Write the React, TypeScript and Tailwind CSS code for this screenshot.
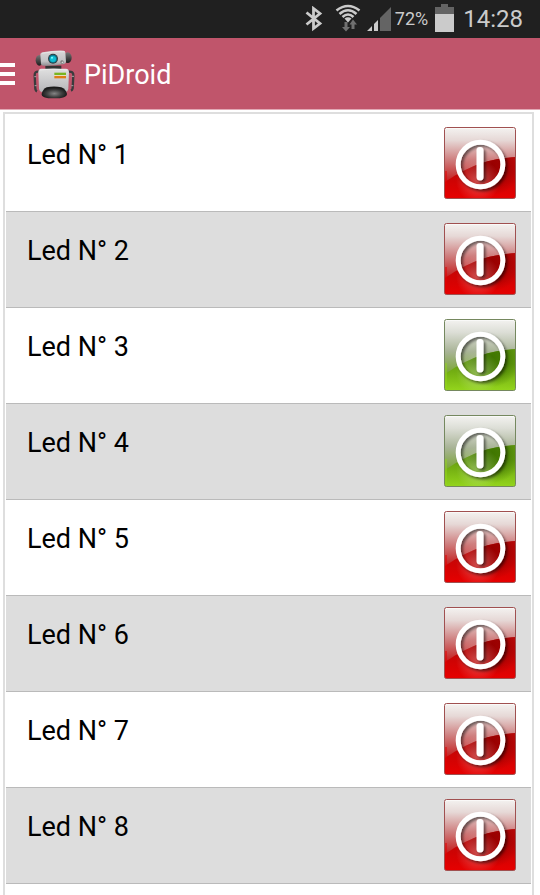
import { useId, useState } from "react";

type Led = { id: number; on: boolean };

const INITIAL_LEDS: Led[] = [
	{ id: 1, on: false },
	{ id: 2, on: false },
	{ id: 3, on: true },
	{ id: 4, on: true },
	{ id: 5, on: false },
	{ id: 6, on: false },
	{ id: 7, on: false },
	{ id: 8, on: false },
];

const PALETTES = {
	on: { edge: "#75885f", top: "#dcdeD6", mid: "#a9b497", gloss: "#7ba636", base: "#65a008", dark: "#3f7500", bright: "#93d41c" },
	off: { edge: "#a05050", top: "#e6d8d6", mid: "#cf8080", gloss: "#c42020", base: "#c40000", dark: "#980000", bright: "#e60000" },
};

function BluetoothIcon() {
	return (
		<svg width="18" height="26" viewBox="0 0 18 26" fill="none" aria-hidden="true">
			<path
				d="M1.500 6.500 L15 17.500 L8.500 22.500 V2.500 L15 7.500 L1.500 18.500"
				stroke="#cbcbcb"
				strokeWidth="2.800"
				strokeLinejoin="miter"
			/>
		</svg>
	);
}

function WifiIcon() {
	return (
		<svg width="26" height="28" viewBox="0 0 26 28" fill="none" aria-hidden="true">
			<g stroke="#cbcbcb" strokeWidth="2.600">
				<path d="M1.500 6.500 Q13 -2.500 24.500 6.500" />
				<path d="M4.500 10 Q13 2.500 21.500 10" />
				<path d="M7.500 13 Q13 8 18.500 13" />
			</g>
			<path d="M9.500 14.500 Q13 12 16.500 14.500 L13 18.500Z" fill="#cbcbcb" />
			<path
				d="M9.500 18 h3 v5 h2.500 L11 27.500 L7 23 h2.500Z M16.500 25 h3 v-4.500 h2.500 L18 15.500 L14.500 20.500 h2Z"
				fill="#707070"
			/>
		</svg>
	);
}

function SignalIcon() {
	return (
		<svg width="24" height="24" viewBox="0 0 24 24" aria-hidden="true">
			<path d="M0 24 L5 19 V24Z M7 24 V17 L11 13 V24Z" fill="#cbcbcb" />
			<path d="M13 24 V11 L24 0 V24Z" fill="#646464" />
		</svg>
	);
}

function BatteryIcon() {
	return (
		<svg width="19" height="28" viewBox="0 0 19 28" aria-hidden="true">
			<path d="M6 0 H13 V3 H19 V10 H0 V3 H6Z" fill="#646464" />
			<path d="M0 10 H19 V28 H0Z" fill="#cbcbcb" />
		</svg>
	);
}

function RobotLogo() {
	return (
		<svg width="52" height="58" viewBox="0 0 156 174" aria-hidden="true">
			<defs>
				<linearGradient id="robot-head" x1="0" y1="0" x2="0" y2="1">
					<stop offset="0" stopColor="#d8d8d8" />
					<stop offset="0.7" stopColor="#c2c2c4" />
					<stop offset="1" stopColor="#8d8d90" />
				</linearGradient>
				<linearGradient id="robot-body" x1="0" y1="0" x2="0" y2="1">
					<stop offset="0" stopColor="#e0e0e0" />
					<stop offset="1" stopColor="#b5b5b8" />
				</linearGradient>
				<radialGradient id="robot-base" cx="0.5" cy="0.6" r="0.5">
					<stop offset="0" stopColor="#858585" />
					<stop offset="0.6" stopColor="#3f3f3f" />
					<stop offset="1" stopColor="#1b1b1b" />
				</radialGradient>
				<linearGradient id="robot-ear" x1="0" y1="0" x2="0" y2="1">
					<stop offset="0" stopColor="#777" />
					<stop offset="1" stopColor="#1b1b1b" />
				</linearGradient>
			</defs>
			<ellipse cx="34" cy="46" rx="11" ry="16" fill="url(#robot-ear)" />
			<ellipse cx="119" cy="38" rx="12" ry="16" fill="url(#robot-ear)" />
			<path d="M52 62 H100 V74 H52Z" fill="#333" />
			<path
				d="M44 22 Q74 16 107 17 Q111 17 112 22 L114 50 Q114 56 108 57 Q78 63 46 62 Q40 62 39 56 L37 28 Q37 23 44 22Z"
				fill="url(#robot-head)"
			/>
			<path d="M42 25 Q74 18 110 20" fill="none" stroke="#eeeeee" strokeWidth="2" />
			<circle cx="75" cy="41" r="15" fill="#333d42" />
			<circle cx="75" cy="41" r="12" fill="#087c92" />
			<circle cx="75" cy="42" r="9" fill="#10bdd3" />
			<circle cx="72" cy="38" r="3" fill="#80ffff" />
			<circle cx="102" cy="51" r="5" fill="#777" />
			<circle cx="103" cy="52" r="2.500" fill="#ddd" />
			<path
				d="M32 80 Q20 78 20 91 L22 132 Q23 137 27 139 M120 80 Q137 78 136 91 L134 130 Q133 135 129 137"
				fill="none"
				stroke="#3b3b3d"
				strokeWidth="7"
			/>
			<path d="M19 95 H25 M131 94 H138 M20 122 H26 M130 122 H136" stroke="#a7a7a7" strokeWidth="3" />
			<path
				d="M40 71 H114 Q123 72 123 82 L121 130 Q120 142 109 142 H46 Q34 142 33 130 L31 82 Q31 72 40 71Z"
				fill="url(#robot-body)"
			/>
			<path d="M36 75 Q77 69 118 75" fill="none" stroke="#f1f1f1" strokeWidth="2" />
			<path d="M79 83 H114 V90 H79Z" fill="#79b520" />
			<path d="M79 93 H114 V100 H79Z" fill="#df7d16" />
			<path d="M79 90 H114 V93 H79Z" fill="#e5dfc0" />
			<path
				d="M56 127 Q78 122 100 127 Q113 132 117 146 Q118 160 78 160 Q38 160 41 146 Q45 132 56 127Z"
				fill="url(#robot-base)"
			/>
		</svg>
	);
}

function PowerIcon({ on }: { on: boolean }) {
	const id = useId();
	const colors = on ? PALETTES.on : PALETTES.off;

	return (
		<svg width="72" height="72" viewBox="0 0 72 72" aria-hidden="true">
			<defs>
				<linearGradient id={`${id}-top`} x1="0" y1="0" x2="0" y2="1">
					<stop offset="0" stopColor="#f4f3f1" />
					<stop offset="0.18" stopColor={colors.top} />
					<stop offset="0.45" stopColor={colors.mid} />
					<stop offset="0.75" stopColor={colors.gloss} />
					<stop offset="1" stopColor={colors.bright} />
				</linearGradient>
				<linearGradient id={`${id}-bottom`} x1="0" y1="28" x2="0" y2="71" gradientUnits="userSpaceOnUse">
					<stop offset="0" stopColor={colors.base} />
					<stop offset="0.4" stopColor={colors.base} />
					<stop offset="1" stopColor={colors.bright} />
				</linearGradient>
				<radialGradient id={`${id}-shade`} cx="48" cy="38" r="30" gradientUnits="userSpaceOnUse">
					<stop offset="0" stopColor={colors.dark} />
					<stop offset="0.5" stopColor={colors.dark} stopOpacity="0.75" />
					<stop offset="1" stopColor={colors.dark} stopOpacity="0" />
				</radialGradient>
				<radialGradient id={`${id}-glow`} cx="0.5" cy="0.5" r="0.5">
					<stop offset="0" stopColor="#fff" stopOpacity="0.3" />
					<stop offset="1" stopColor="#fff" stopOpacity="0" />
				</radialGradient>
				<filter id={`${id}-shadow`} x="-20%" y="-20%" width="150%" height="150%">
					<feDropShadow dx="2" dy="2" stdDeviation="1.800" floodColor="#000" floodOpacity="0.55" />
				</filter>
			</defs>
			<rect x="0.500" y="0.500" width="71" height="71" rx="2" fill={`url(#${id}-top)`} />
			<path d="M1 55 C10 49 18 44 30 39 C44 33 58 31 71 30 V71 H1Z" fill={`url(#${id}-bottom)`} opacity="0.9" />
			<path d="M1 55 C10 49 18 44 30 39 C44 33 58 31 71 30 V71 H1Z" fill={`url(#${id}-shade)`} />
			<circle cx="34" cy="54" r="22" fill={`url(#${id}-glow)`} />
			<path d="M2 70 V44" stroke={colors.bright} strokeWidth="2" opacity="0.5" />
			<path d="M2 1.500 H70" stroke="#fff" strokeWidth="1" opacity="0.6" />
			<rect x="0.500" y="0.500" width="71" height="71" rx="2" fill="none" stroke={colors.edge} />
			<g filter={`url(#${id}-shadow)`} fill="none" stroke="#fff">
				<circle cx="36.500" cy="37.500" r="22.300" strokeWidth="5" />
				<path d="M36 23.500 V50" strokeWidth="7" strokeLinecap="round" />
			</g>
		</svg>
	);
}

function StatusBar() {
	return (
		<div className="flex h-[38px] shrink-0 items-center justify-end bg-[#202020] pr-[17px] text-[#cbcbcb]">
			<BluetoothIcon />
			<div className="ml-3 pb-0.5">
				<WifiIcon />
			</div>
			<div className="ml-1.5">
				<SignalIcon />
			</div>
			<span className="ml-1 text-lg">72%</span>
			<div className="ml-[7px] pb-0.5">
				<BatteryIcon />
			</div>
			<time className="ml-[9px] text-2xl">14:28</time>
		</div>
	);
}

function AppHeader() {
	return (
		<header className="flex h-[72px] shrink-0 items-center border-b border-[#e2a9b5] bg-[#c0556b]">
			<button type="button" aria-label="Open menu" className="flex w-[15px] flex-col gap-[5px]">
				<span className="h-1 w-full bg-white" />
				<span className="h-1 w-full bg-white" />
				<span className="h-1 w-full bg-white" />
			</button>
			<div className="ml-[13px]">
				<RobotLogo />
			</div>
			<h1 className="ml-1 pt-0.5 text-[27px] leading-8 text-white">PiDroid</h1>
		</header>
	);
}

export default function App() {
	const [leds, setLeds] = useState<Led[]>(INITIAL_LEDS);

	const toggleLed = (id: number) => {
		setLeds((current) =>
			current.map((led) => (led.id === id ? { ...led, on: !led.on } : led)),
		);
	};

	return (
		<div className="flex min-h-screen flex-col bg-white font-['Roboto',sans-serif]">
			<StatusBar />
			<AppHeader />
			<main className="mt-0.5 mr-1.5 ml-[3px] flex-1 border-2 border-b-0 border-[#dedede] px-px pt-0.5">
				<ul>
					{leds.map((led) => (
						<li
							key={led.id}
							className="flex h-24 items-start justify-between border-b border-[#bababa] pt-[11px] pr-[15px] pl-[21px] even:bg-[#dddddd]"
						>
							<span className="text-[27px] leading-[56px] text-black">Led N° {led.id}</span>
							<button
								type="button"
								aria-label={`Led ${led.id}`}
								aria-pressed={led.on}
								onClick={() => toggleLed(led.id)}
								className="block size-[72px]"
							>
								<PowerIcon on={led.on} />
							</button>
						</li>
					))}
				</ul>
			</main>
		</div>
	);
}
